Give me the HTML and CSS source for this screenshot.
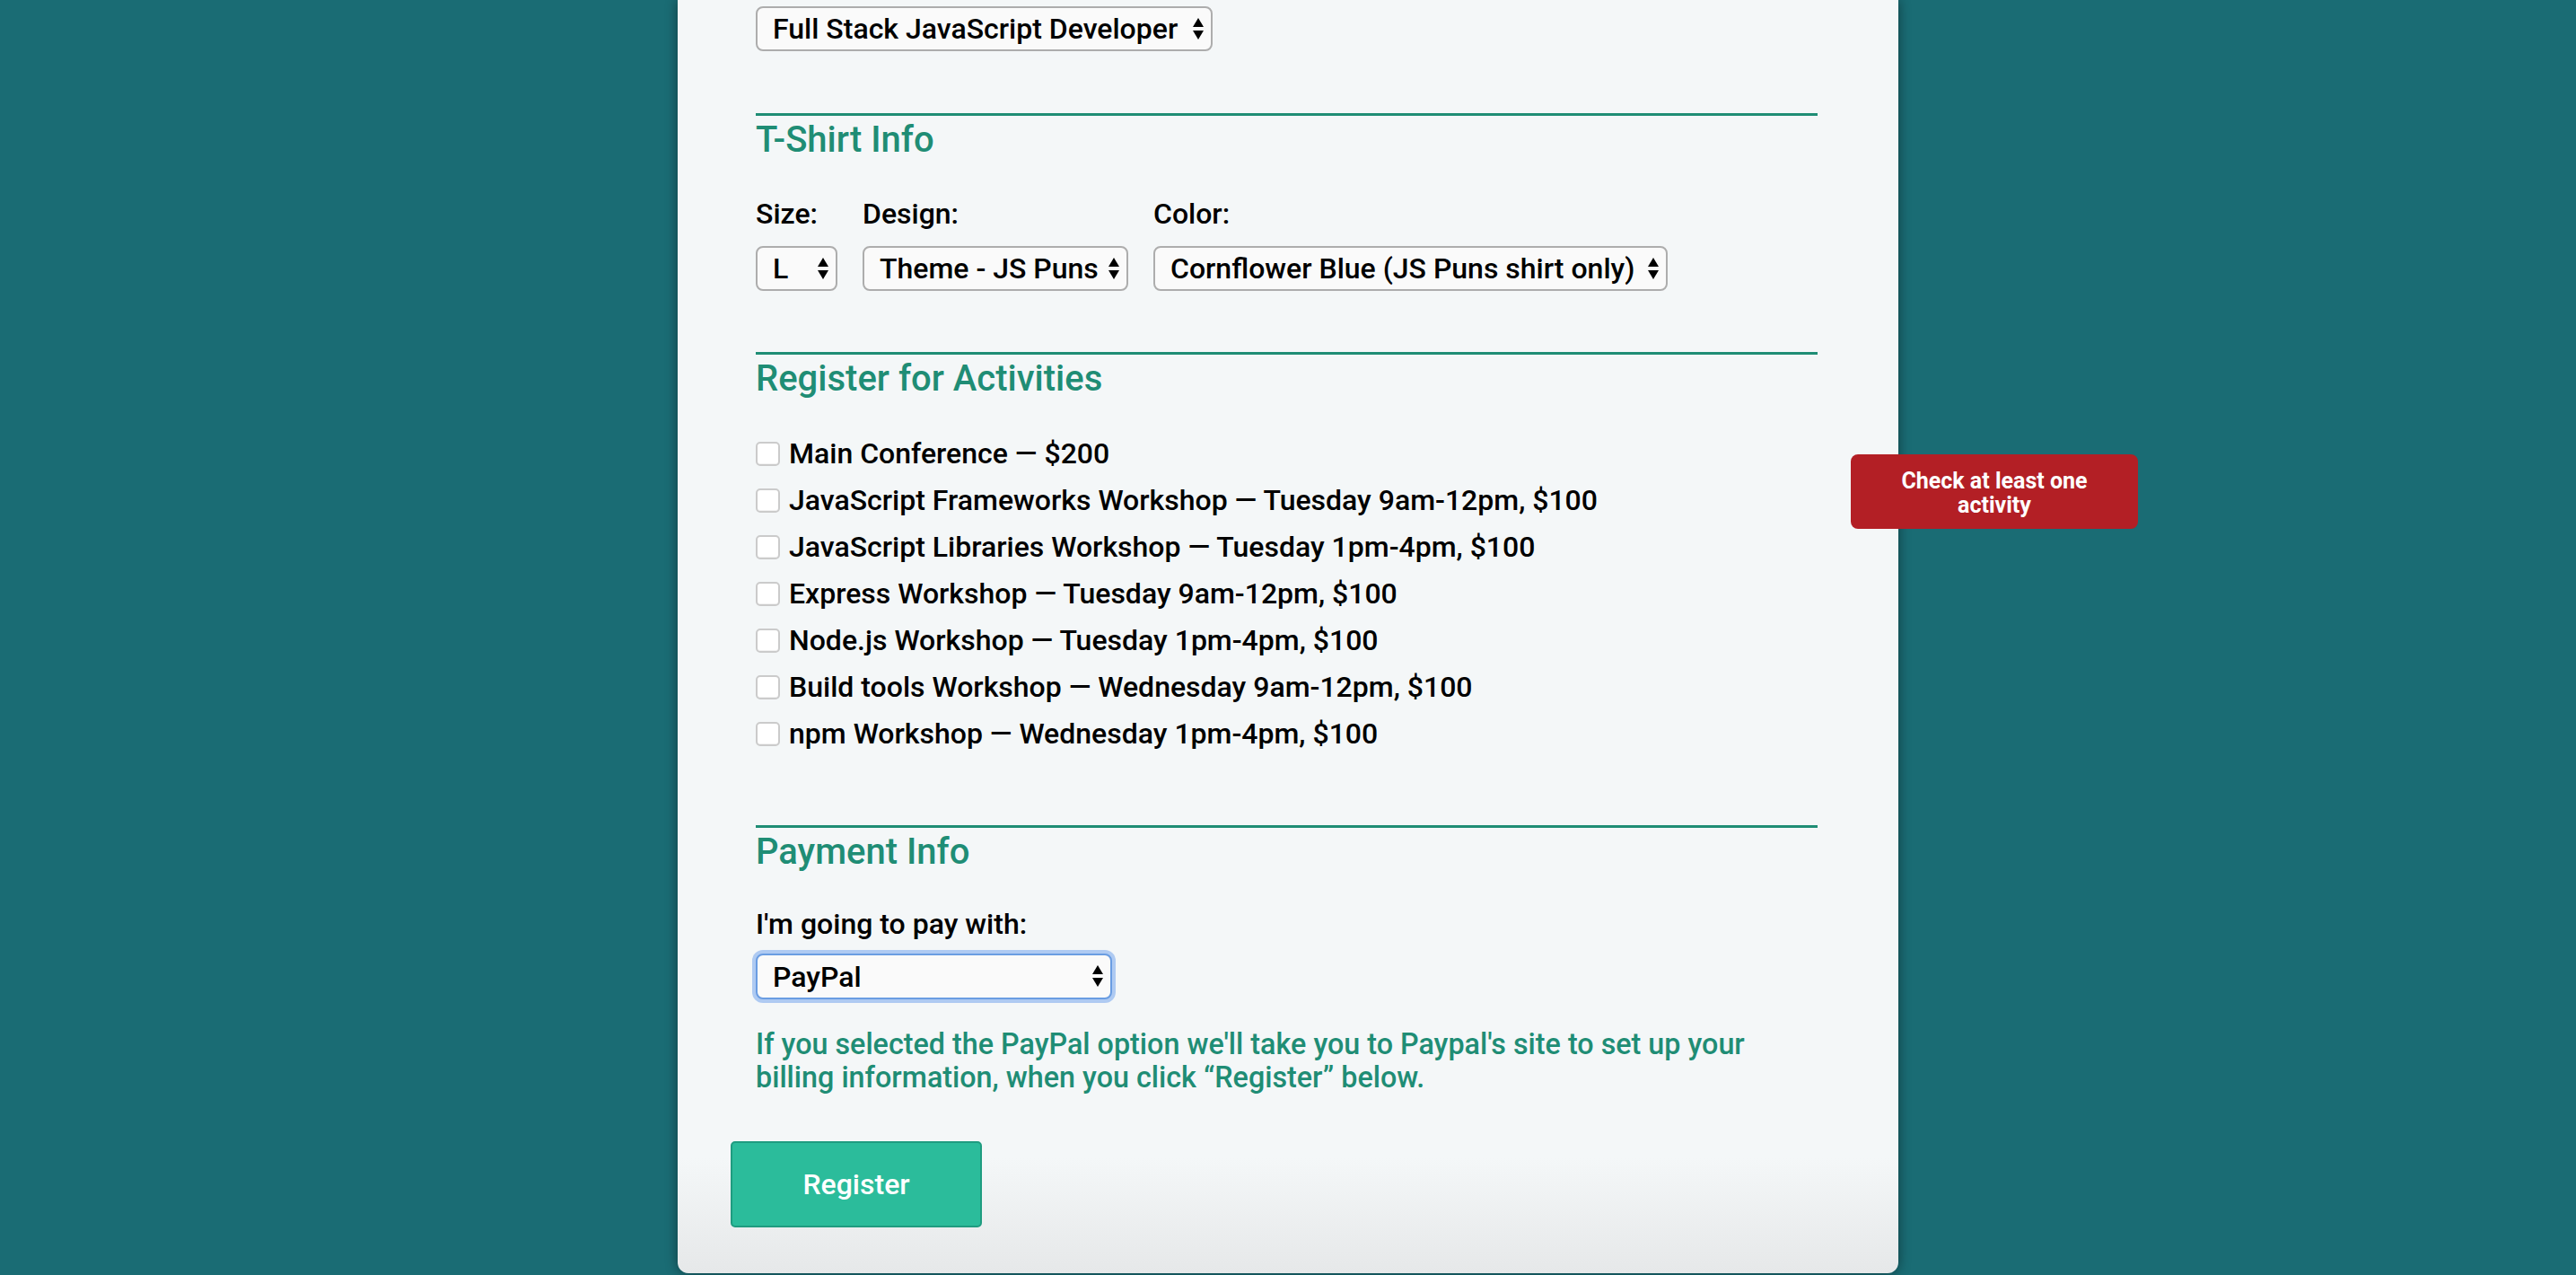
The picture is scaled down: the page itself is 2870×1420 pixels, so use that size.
FILE: index.html
```html
<!DOCTYPE html>
<html lang="en">
<head>
<meta charset="utf-8">
<title>Conference Registration</title>
<link rel="stylesheet" href="styles.css">
</head>
<body>
<div class="card">
  <div class="sel-wrap sel-title">
    <select class="sel"><option>Full Stack JavaScript Developer</option></select>
    <svg class="arrows" viewBox="0 0 14 28" width="14" height="28"><polygon points="7,2 13,12 1,12"/><polygon points="1,16 13,16 7,26"/></svg>
  </div>

  <section class="section">
    <h2 class="legend">T-Shirt Info</h2>
    <div class="shirt-row">
      <div class="field">
        <label class="label">Size:</label>
        <div class="sel-wrap sel-size">
          <select class="sel"><option>L</option></select>
          <svg class="arrows" viewBox="0 0 14 28" width="14" height="28"><polygon points="7,2 13,12 1,12"/><polygon points="1,16 13,16 7,26"/></svg>
        </div>
      </div>
      <div class="field">
        <label class="label">Design:</label>
        <div class="sel-wrap sel-design">
          <select class="sel"><option>Theme - JS Puns</option></select>
          <svg class="arrows" viewBox="0 0 14 28" width="14" height="28"><polygon points="7,2 13,12 1,12"/><polygon points="1,16 13,16 7,26"/></svg>
        </div>
      </div>
      <div class="field">
        <label class="label">Color:</label>
        <div class="sel-wrap sel-color">
          <select class="sel"><option>Cornflower Blue (JS Puns shirt only)</option></select>
          <svg class="arrows" viewBox="0 0 14 28" width="14" height="28"><polygon points="7,2 13,12 1,12"/><polygon points="1,16 13,16 7,26"/></svg>
        </div>
      </div>
    </div>
  </section>

  <section class="section activities">
    <h2 class="legend">Register for Activities</h2>
    <ul class="act-list">
      <li class="act"><input type="checkbox" class="cb"><span>Main Conference — $200</span></li>
      <li class="act"><input type="checkbox" class="cb"><span>JavaScript Frameworks Workshop — Tuesday 9am-12pm, $100</span></li>
      <li class="act"><input type="checkbox" class="cb"><span>JavaScript Libraries Workshop — Tuesday 1pm-4pm, $100</span></li>
      <li class="act"><input type="checkbox" class="cb"><span>Express Workshop — Tuesday 9am-12pm, $100</span></li>
      <li class="act"><input type="checkbox" class="cb"><span>Node.js Workshop — Tuesday 1pm-4pm, $100</span></li>
      <li class="act"><input type="checkbox" class="cb"><span>Build tools Workshop — Wednesday 9am-12pm, $100</span></li>
      <li class="act"><input type="checkbox" class="cb"><span>npm Workshop — Wednesday 1pm-4pm, $100</span></li>
    </ul>
  </section>

  <section class="section payment">
    <h2 class="legend">Payment Info</h2>
    <label class="label pay-label">I'm going to pay with:</label>
    <div class="sel-wrap sel-pay">
      <select class="sel sel-focus"><option>PayPal</option></select>
      <svg class="arrows" viewBox="0 0 14 28" width="14" height="28"><polygon points="7,2 13,12 1,12"/><polygon points="1,16 13,16 7,26"/></svg>
    </div>
    <p class="pay-note">If you selected the PayPal option we'll take you to Paypal's site to set up your billing information, when you click “Register” below.</p>
  </section>

  <button class="btn" type="button">Register</button>

  <div class="tooltip">Check at least one activity</div>
</div>
</body>
</html>
```

FILE: styles.css
```css
html, body {
  margin: 0;
  padding: 0;
  height: 1420px;
  overflow: hidden;
}

body {
  background: #1a6c74;
  font-family: "Roboto", "Liberation Sans", sans-serif;
  color: #000;
}

.card {
  position: relative;
  box-sizing: border-box;
  width: 1360px;
  margin: 0 auto;
  padding: 7px 90px 51px 87px;
  background: linear-gradient(to bottom, #f4f7f8 0, #f4f7f8 1290px, #e6e8e9 100%);
  border-radius: 0 0 12px 12px;
  box-shadow: 0 0 14px rgba(0, 0, 0, 0.45);
}

/* selects */
.sel-wrap {
  position: relative;
  height: 50px;
}

.sel {
  -webkit-appearance: none;
  appearance: none;
  box-sizing: border-box;
  width: 100%;
  height: 50px;
  margin: 0;
  padding: 0 30px 0 17px;
  border: 2px solid #adadad;
  border-radius: 8px;
  background: #fafafa;
  font-family: "Roboto", "Liberation Sans", sans-serif;
  font-size: 32px;
  font-weight: 500;
  color: #000;
  outline: none;
}

.sel-focus {
  border-color: #6a9de2;
  box-shadow: 0 0 0 4px rgba(126, 171, 238, 0.6);
}

.arrows {
  position: absolute;
  right: 9px;
  top: 11px;
  fill: #000;
}

.sel-title { width: 509px; }
.sel-size { width: 91px; }
.sel-design { width: 296px; }
.sel-color { width: 573px; }
.sel-pay { width: 397px; margin-top: 14px; height: 51px; }
.sel-pay .sel { height: 51px; }

/* sections */
.section {
  border-top: 3px solid #1f8d75;
}

.sel-title + .section { margin-top: 69px; }

.legend {
  margin: 0;
  padding-top: 5px;
  font-size: 40px;
  font-weight: 500;
  line-height: 44px;
  color: #1f8d75;
}

.label {
  display: block;
  font-size: 32px;
  font-weight: 500;
  line-height: 38px;
}

.shirt-row {
  display: flex;
  gap: 28px;
  margin-top: 41px;
}

.field .label { margin-bottom: 17px; }

.activities { margin-top: 68px; }

.act-list {
  list-style: none;
  margin: 35px 0 0;
  padding: 0;
}

.act {
  display: flex;
  align-items: center;
  gap: 10px;
  height: 52px;
  font-size: 32px;
  font-weight: 500;
  white-space: nowrap;
}

.cb {
  -webkit-appearance: none;
  appearance: none;
  box-sizing: border-box;
  width: 27px;
  height: 27px;
  margin: 0;
  border: 2px solid #cbcbcb;
  border-radius: 5px;
  background: #fff;
  box-shadow: inset 0 -1px 0 rgba(0, 0, 0, 0.05);
  flex: none;
}

.payment { margin-top: 76px; }

.pay-label { margin-top: 39px; }

.pay-note {
  margin: 32px 0 0;
  font-size: 32.3px;
  font-weight: 500;
  line-height: 37px;
  color: #1f8d75;
}

.btn {
  display: block;
  box-sizing: border-box;
  width: 280px;
  height: 96px;
  margin: 52px 0 0 -28px;
  border: 2px solid #1f9c80;
  border-radius: 5px;
  background: #2bbc9b;
  color: #fff;
  font-family: "Roboto", "Liberation Sans", sans-serif;
  font-size: 32px;
  font-weight: 500;
}

.tooltip {
  position: absolute;
  left: 1307px;
  top: 506px;
  box-sizing: border-box;
  width: 320px;
  height: 83px;
  padding: 16px 40px 0;
  border-radius: 8px;
  background: #b31f25;
  color: #fff;
  font-size: 25px;
  font-weight: 700;
  line-height: 27px;
  text-align: center;
}
```
